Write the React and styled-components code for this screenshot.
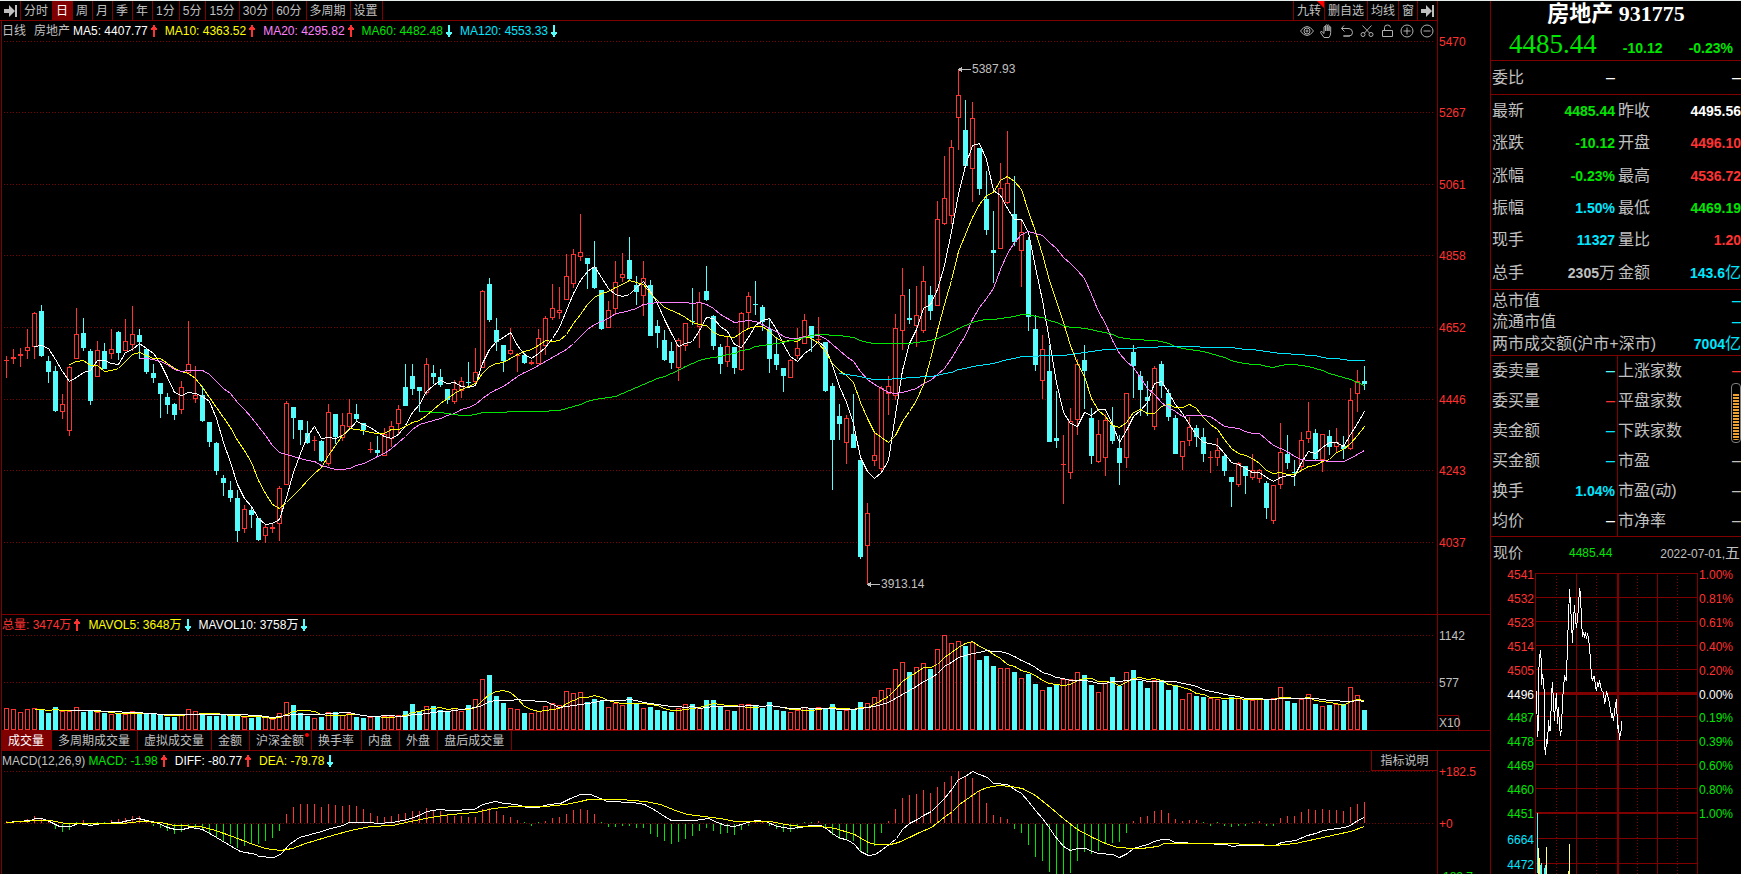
import React from "react";
import styled, { createGlobalStyle, css } from "styled-components";

const C = {
  line: "#800000",
  red: "#ff3232",
  green: "#00e600",
  cyan: "#54fcfc",
  blue: "#00e6ff",
  yellow: "#ffff00",
  pink: "#ff80ff",
  white: "#ffffff",
  gray: "#c0c0c0",
};

const Global = createGlobalStyle`
  * { box-sizing: border-box; }
  body {
    margin: 0;
    background: #000;
    color: ${C.gray};
    font: 12px/16px "Liberation Sans", "Noto Sans CJK SC", sans-serif;
  }
  button { font: inherit; color: inherit; background: none; border: 0; padding: 0; margin: 0; cursor: pointer; }
  dl, dt, dd, h1 { margin: 0; padding: 0; font-weight: 400; }
  svg { display: block; }
`;

const Page = styled.div`
  display: flex;
  height: 100vh;
  overflow: hidden;
  border-top: 1px solid #e6ecea;
  white-space: nowrap;
`;

const Main = styled.main`
  flex: 1;
  min-width: 0;
  display: flex;
  flex-direction: column;
`;

/* ---------- top toolbar ---------- */
const Toolbar = styled.nav`
  display: flex;
  height: 20px;
`;
const ToolbarInner = styled.div`
  flex: 1;
  display: flex;
  border-bottom: 1px solid ${C.line};
`;
const Spacer = styled.div`
  flex: 1;
`;
const AxisHead = styled.div`
  width: 53px;
  border-left: 1px solid ${C.line};
`;
const CollapseButton = styled.button`
  width: 21px;
  padding-left: 4px;
  border-right: 1px solid ${C.line};
`;
const PeriodButton = styled.button`
  padding: 0 4px 0 3px;
  border-right: 1px solid ${C.line};
  ${(p) => p.$active && css`background: ${C.line}; color: ${C.white};`}
`;
const ToolButton = styled.button`
  position: relative;
  padding: 0 3px 0 3px;
  border-left: 1px solid ${C.line};
`;
const NewCorner = styled.span`
  position: absolute;
  top: 0;
  right: 0;
  border-top: 7px solid #ff0000;
  border-left: 7px solid transparent;
`;

/* ---------- chart panes ---------- */
const Pane = styled.section`
  display: flex;
  margin-left: 1px;
  border-left: 1px solid ${C.line};
  border-bottom: 1px solid ${C.line};
  ${(p) => p.$grow && css`flex: 1; min-height: 0; overflow: hidden; border-bottom: 0;`}
`;
const Plot = styled.div`
  flex: 1;
  min-width: 0;
  overflow: hidden;
`;
const Axis = styled.div`
  width: 53px;
  border-left: 1px solid ${C.line};
`;
const Legend = styled.div`
  display: flex;
  align-items: center;
  height: 20px;
`;
const LegendName = styled.span`
  margin-right: ${(p) => p.$gap}px;
`;
const LegendItem = styled.span`
  display: flex;
  align-items: center;
  gap: 3px;
  margin-right: 8px;
  color: ${(p) => p.$color};
`;
const ChartTools = styled.div`
  display: flex;
  gap: 4px;
  margin-left: auto;
  padding-right: 2px;
`;
const IconButton = styled.button`
  width: 16px;
  height: 16px;
`;
const NoteButton = styled.button`
  align-self: stretch;
  width: 66px;
  margin-left: auto;
  border-left: 1px solid ${C.line};
  border-bottom: 1px solid ${C.line};
`;

const Tabs = styled.nav`
  display: flex;
  height: 20px;
  margin-left: 1px;
  border-left: 1px solid ${C.line};
  border-bottom: 1px solid ${C.line};
`;
const Tab = styled.button`
  position: relative;
  padding: 0 7px 0 6px;
  border-right: 1px solid ${C.line};
  ${(p) => p.$active && css`background: ${C.line}; color: ${C.white};`}
`;
const Dot = styled.span`
  position: absolute;
  top: 2px;
  right: 2px;
  width: 4px;
  height: 4px;
  border-radius: 2px;
  background: #ff0000;
`;

/* ---------- quote panel ---------- */
const Side = styled.aside`
  position: relative;
  width: 251px;
  flex: none;
  display: flex;
  flex-direction: column;
  border-left: 1px solid ${C.line};
  overflow: hidden;
  > * { flex: none; }
`;
const Head = styled.header`
  height: 60px;
  border-bottom: 1px solid ${C.line};
`;
const Title = styled.h1`
  height: 27px;
  text-align: center;
  color: ${C.white};
  font: bold 22px/25px "Liberation Serif", "Noto Sans CJK SC", serif;
`;
const Quote = styled.div`
  display: flex;
  align-items: baseline;
  justify-content: space-between;
  height: 32px;
  padding: 0 8px 0 18px;
  color: ${C.green};
  font: bold 14px/32px "Liberation Sans", sans-serif;
`;
const Price = styled.span`
  font: 27px/32px "Liberation Serif", serif;
`;
const Stats = styled.dl`
  display: grid;
  grid-template-columns: ${(p) => (p.$wide ? "1fr" : "127px 1fr")};
  grid-auto-rows: 1fr;
  height: ${(p) => p.$h}px;
  border-bottom: 1px solid ${C.line};
  font-size: 16px;
  line-height: 20px;
`;
const Stat = styled.div`
  display: flex;
  align-items: center;
  justify-content: space-between;
  &:nth-child(odd) {
    padding-left: 1px;
    padding-right: 3px;
    ${(p) => p.$divided && css`padding-right: 2px; border-right: 1px solid ${C.line};`}
  }
  ${(p) => p.$wide && css`&&:nth-child(n) { padding: 0 0 0 1px; }`}
`;
const Value = styled.dd`
  display: flex;
  align-items: center;
  color: ${(p) => p.$color};
  font-weight: ${(p) => (p.$plain ? 400 : 700)};
  font-size: ${(p) => (p.$plain ? 16 : 14)}px;
`;
const Unit = styled.span`
  font-size: 16px;
  font-weight: 400;
`;
const ScrollThumb = styled.div`
  position: absolute;
  right: 0;
  top: 382px;
  width: 10px;
  height: 60px;
  padding: 10px 1px 2px;
  border: 1px solid #808080;
  border-radius: 4px;
  background: repeating-linear-gradient(#f0a030 0 2px, #000 2px 3px) content-box, #000;
`;
const NowRow = styled.div`
  display: grid;
  grid-template-columns: 76px 1fr auto;
  align-items: center;
  height: 32px;
  padding: 0 1px 0 2px;
`;
const NowLabel = styled.span`
  font-size: 15px;
`;
const NowPrice = styled.span`
  color: ${C.green};
`;
const DayMark = styled.span`
  font-size: 15px;
`;

/* ---------- icons ---------- */
const ArrowUp = () => (
  <svg width="6" height="12" fill={C.red} role="img" aria-label="上升">
    <path d="M2 12V5H0V3h1V2h1V0h2v2h1v1h1v2H4v7z" />
  </svg>
);
const ArrowDown = () => (
  <svg width="6" height="12" fill={C.cyan} role="img" aria-label="下降">
    <path d="M2 0v7H0v2h1v1h1v2h2v-2h1V9h1V7H4V0z" />
  </svg>
);
const SkipIcon = () => (
  <svg width="13" height="12" fill={C.gray}>
    <path d="M0 4h5V0l6 6-6 6V8H0zM11 0h2v12h-2z" />
  </svg>
);
const icons = {
  显示: (
    <>
      <path d="M1.5 8Q4.500 3.500 8 3.500T14.500 8Q11.500 12.500 8 12.500T1.500 8Z" />
      <circle cx="8" cy="8" r="3" />
      <circle cx="8" cy="8" r="1" />
    </>
  ),
  拖动: <path d="M5 14.500 1.500 9.500q0-1.500 1.500-.8L5 10.500V4q.8-1.500 1.500 0V8 2.500q.9-1.500 1.700 0V8 2.500q.9-1.500 1.800 0V8 4q.8-1.500 1.700 0V9.500q0 3-1.700 5Z" />,
  撤销: <path d="M5 2.500 2.500 5.500 5.500 8.500M2.500 5.500H10Q13.500 6 13.500 9.500T10 13H4M5 13h6" />,
  剪切: (
    <>
      <path d="M3.500 2.500 10.500 10M12.500 2.500 5.500 10" />
      <circle cx="4" cy="11.500" r="2" />
      <circle cx="12" cy="11.500" r="2" />
    </>
  ),
  锁定: <path d="M3.500 7.500h10v6h-10zM5.500 7.500V4.500Q5.500 2 8.500 2T11.500 4.500" />,
  放大: (
    <>
      <circle cx="8" cy="8" r="6" />
      <path d="M4.500 8h7M8 4.500v7" />
    </>
  ),
  缩小: (
    <>
      <circle cx="8" cy="8" r="6" />
      <path d="M4.500 8h7" />
    </>
  ),
};

/* ---------- data ---------- */
// One entry per day: direction, high, low, body top, body bottom.
const candles = `
r356,377,360,360 r349,363,357,358 r348,366,354,355 r329,358,347,350 r312,358,313,346 c305,356,311,355 c356,382,361,371 c366,411,371,410 r394,418,404,411 r366,435,367,430
r308,358,334,358 c318,350,333,347 c349,404,351,400 r341,376,350,376 c343,368,351,368 r329,358,349,353 c331,359,332,352 r319,350,341,350 r306,350,334,344 c329,358,335,341
c348,373,349,371 c364,382,373,377 c383,417,383,393 c393,413,397,404 c403,419,404,414 r381,413,387,409 r321,372,364,372 r366,402,395,398 c386,421,395,420 c422,446,422,441
c442,474,443,470 c475,495,478,482 c481,501,490,497 c490,541,498,530 r505,532,509,528 c508,527,510,514 c518,540,518,539 r525,542,527,535 r523,532,527,528 r486,540,488,523
r401,484,403,484 c407,438,407,417 c420,444,420,429 c421,443,433,442 r436,450,440,440 c440,461,441,460 r404,465,412,463 c414,443,414,436 r413,440,425,437 r399,427,413,426
c404,420,414,418 c423,434,423,429 r442,452,449,449 c436,456,450,452 r428,455,434,455 r421,446,426,438 r405,433,409,423 c364,405,387,405 c364,394,376,388 c387,411,387,390
r358,394,364,392 c365,383,373,376 c369,386,377,384 c389,403,389,399 r380,403,389,401 r377,397,381,390 c362,385,382,382 r348,382,372,381 r290,367,291,367 c278,321,284,319
c318,350,330,341 c345,371,345,360 r328,354,350,353 r353,371,355,355 c353,363,355,362 r360,364,362,363 r329,363,338,363 r316,354,318,345 r284,319,308,317 r287,318,310,312
r254,299,276,299 r249,287,254,283 r214,260,252,256 c258,288,258,263 c241,288,267,287 c290,329,290,328 r301,327,310,327 r261,314,282,308 r253,281,274,277 c237,279,260,278
c276,304,285,291 r261,315,278,295 c280,335,285,335 c320,347,326,332 c330,360,340,359 c342,368,351,362 r338,380,340,367 r323,350,323,345 c288,324,321,321 r292,347,302,326
c266,300,291,299 c315,349,316,345 c344,373,347,363 r336,366,346,361 c347,373,347,367 r312,370,313,369 r292,328,296,312 c281,314,304,304 c305,330,307,321 c318,372,329,358
c337,369,354,364 c368,391,368,375 r359,377,360,377 r328,358,348,355 r314,343,320,343 c326,351,326,337 r317,342,339,339 c342,391,342,390 c383,489,386,439 c404,439,416,423
r415,463,418,442 c394,447,434,447 c460,558,460,556 r503,583,513,545 r433,465,455,460 r386,471,388,468 r376,414,386,393 r314,399,328,395 r268,349,295,330 c289,323,318,319
r286,346,315,325 r266,332,281,330 c286,319,295,310 r201,305,219,305 r156,224,198,223 r140,223,147,215 r69,149,95,117 c100,165,130,165 r102,201,118,168 c148,194,148,188
c171,234,199,229 c211,282,250,252 r163,248,188,248 r131,203,183,202 c176,245,214,241 r221,286,232,250 c237,330,240,316 c315,370,329,364 r335,398,349,380 c345,441,371,441
c391,447,438,440 r435,503,464,464 r408,478,421,472 r359,434,364,419 c345,408,360,370 c408,463,418,455 r420,462,434,461 r414,475,420,457 c407,443,425,440 c435,484,448,462
r393,467,393,457 c345,397,352,365 c371,415,376,389 c381,415,397,400 r366,429,368,426 c361,397,364,385 c389,420,393,416 c415,453,418,453 r441,469,441,456 r417,445,427,440
c425,446,428,436 c428,461,437,453 r451,472,457,457 r438,465,450,457 c453,475,456,470 c477,506,477,481 r462,486,463,484 c466,493,466,475 r454,479,470,477 r469,482,470,478
c481,518,483,507 r485,523,485,520 r423,488,452,484 c435,468,454,462 c460,485,472,472 r432,469,440,466 r402,442,431,438 c429,459,433,458 r434,471,434,459 c430,454,436,446
r428,451,442,446 c436,458,446,448 r388,449,400,448 r370,411,381,393 c366,389,381,383`
  .trim()
  .split(/\s+/)
  .map((s) => {
    const [high, low, top, bottom] = s.slice(1).split(",").map(Number);
    const up = s[0] === "r";
    return { up, high, low, top, bottom, close: up ? top : bottom };
  });

const nums = (s) => s.trim().split(/\s+/).map(Number);

const volumes = nums(`
708 709 712 709 708 709 713 707 711 711 707 712 711 712 713 714 714 714 711 714 714 714 715 717 717 714 709 711 714 716
716 715 715 715 717 718 717 717 719 713 702 705 713 716 718 717 712 712 715 713 717 718 717 717 716 716 715 711 704 711
706 706 710 711 708 711 705 699 679 675 696 703 708 709 713 713 711 706 703 705 691 693 692 702 699 701 707 703 705 697
703 708 707 710 711 712 708 704 704 708 700 700 706 710 711 704 704 705 708 702 710 711 712 710 707 709 707 708 704 711
710 710 702 703 697 690 688 669 662 672 667 663 669 649 635 643 641 646 642 660 656 666 668 668 672 678 674 684 690 687
684 679 679 672 675 685 692 683 677 686 672 670 681 688 680 680 690 685 699 693 696 697 698 699 700 697 698 700 700 699
699 698 687 701 703 699 694 704 706 705 704 704 687 695 710`);

const macd = nums(`
821 821 821 819 816 818 820 828 831 829 822 820 825 822 822 820 819 818 816 816 820 825 827 830 833 831 828 828 829 833
836 840 843 847 845 843 843 840 837 830 814 807 804 804 804 807 804 805 806 805 806 809 813 816 817 816 814 813 811 811
808 810 811 814 816 816 817 817 809 808 811 815 817 820 822 825 822 821 818 817 814 810 809 810 814 822 826 826 825 825
827 827 833 836 840 843 841 838 835 830 827 830 833 832 834 829 825 821 821 825 828 831 831 828 822 822 821 827 834 838
838 840 850 852 845 832 821 809 798 795 794 790 793 787 782 776 771 776 778 790 803 815 817 819 828 832 844 856 860 871
876 876 872 860 851 853 850 843 842 841 832 821 817 816 811 810 813 819 821 820 820 822 825 822 825 826 825 825 822 821
825 825 818 816 816 812 809 810 809 810 810 811 807 804 802`);

const diffLine =
  "6,822 30,820 35,818 41,818 49,821 59,826 70,826 78,823 90,825 101,823 120,822 128,820 138,818 146,820 156,822 167,827 175,829 182,829 190,827 202,829 211,834 226,843 240,851 256,854 258,856 273,857 280,854 289,844 299,837 321,831 327,829 342,825 349,822 369,822 378,823 392,822 407,819 416,816 427,811 438,809 450,810 474,809 482,804 495,801 504,803 516,804 526,807 538,807 548,804 560,803 570,798 580,794 590,794 600,798 607,801 633,802 644,804 655,810 664,816 671,820 694,820 708,818 717,822 725,825 734,826 744,823 755,820 765,821 777,826 790,828 800,827 810,825 820,825 827,829 832,833 838,837 848,840 854,844 860,851 868,855 875,854 882,849 890,843 896,838 902,829 909,823 917,819 923,815 931,811 938,804 944,798 952,788 958,779 965,776 972,771 979,774 987,777 993,783 1007,784 1014,789 1021,793 1028,801 1035,810 1042,818 1048,826 1054,835 1063,846 1070,850 1077,848 1085,848 1092,851 1098,853 1112,854 1119,857 1127,853 1133,848 1140,846 1147,844 1154,841 1161,839 1168,839 1175,842 1200,843 1226,844 1232,846 1240,845 1275,845 1281,842 1295,840 1307,835 1315,833 1323,830 1344,827 1350,825 1357,820 1364,817";
const deaLine =
  "6,822 38,820 50,820 65,823 122,823 140,821 160,822 174,825 200,826 215,830 232,836 250,843 265,848 280,850 292,848 305,843 325,837 350,830 370,826 392,825 410,821 430,817 450,814 475,812 493,808 513,806 545,806 565,804 580,801 588,799 620,799 645,801 660,804 675,810 687,814 720,818 735,821 770,821 785,824 800,826 820,826 835,828 854,834 868,842 875,844 890,844 898,842 909,837 919,832 931,827 945,816 952,811 959,804 969,797 979,790 987,787 998,785 1010,786 1022,788 1035,795 1050,807 1064,819 1077,829 1092,837 1105,843 1117,847 1133,848 1141,848 1157,846 1164,843 1226,843 1275,845 1295,843 1327,836 1350,831 1364,826";

const px = (i) => 6 + 7 * i;

// Simple moving average of a series, as polyline points.
const average = (series, n) =>
  series
    .map((_, i) => {
      if (i < n - 1) return null;
      const sum = series.slice(i - n + 1, i + 1).reduce((a, b) => a + b, 0);
      return `${px(i)},${Math.round(sum / n)}`;
    })
    .filter(Boolean)
    .join(" ");

const closes = candles.map((c) => c.close);

const Line = ({ points, color }) => (
  <polyline points={points} fill="none" stroke={color} transform="translate(0.5 0.5)" />
);
const Dotted = ({ y }) => (
  <line x1="4" x2="100%" y1={y + 0.5} y2={y + 0.5} stroke={C.line} strokeDasharray="1 2" />
);
const Bar = ({ x, top, bottom, up }) =>
  up && bottom - top > 1 ? (
    <rect x={x - 1.5} y={top + 0.5} width="4" height={bottom - top} fill="#000" stroke={C.red} />
  ) : (
    <rect x={x - 2} y={top} width="5" height={bottom - top + 1} fill={up ? C.red : C.cyan} />
  );
const AxisText = ({ y, color, children }) => (
  <text x="1" y={y + 5} fill={color}>
    {children}
  </text>
);

const PriceChart = () => (
  <svg width="100%" height="573" shapeRendering="crispEdges">
    <g transform="translate(-2 -41)">
      {[41, 112, 184, 255, 327, 399, 470, 542].map((y) => (
        <Dotted key={y} y={y} />
      ))}
      {candles.map((c, i) => (
        <g key={i}>
          <rect x={px(i)} y={c.high} width="1" height={c.low - c.high + 1} fill={c.up ? C.red : C.cyan} />
          <Bar x={px(i)} {...c} />
        </g>
      ))}
      <Line points={average(closes, 5)} color={C.white} />
      <Line points={average(closes, 10)} color={C.yellow} />
      <Line points={average(closes, 20)} color={C.pink} />
      <Line points={average(closes, 60)} color={C.green} />
      <Line points={average(closes, 120)} color={C.blue} />
      <path d="M958 69h1v-1h2v-1h1v2h9v1h-9v2h-1v-1h-2v-1h-1zM867 584h1v-1h2v-1h1v2h9v1h-9v2h-1v-1h-2v-1h-1z" fill={C.gray} />
      <text x="972" y="73" fill={C.gray}>5387.93</text>
      <text x="881" y="588" fill={C.gray}>3913.14</text>
    </g>
  </svg>
);

const VolumeChart = () => (
  <svg width="100%" height="95" shapeRendering="crispEdges">
    <g transform="translate(-2 -635)">
      <Dotted y={635} />
      <Dotted y={682} />
      {volumes.map((v, i) => (
        <Bar key={i} x={px(i)} top={v} bottom={729} up={candles[i].up} />
      ))}
      <Line points={average(volumes, 5)} color={C.yellow} />
      <Line points={average(volumes, 10)} color={C.white} />
    </g>
  </svg>
);

const MacdChart = () => (
  <svg width="100%" height="160" shapeRendering="crispEdges">
    <g transform="translate(-2 -771)">
      <Dotted y={771} />
      <Dotted y={823} />
      {macd.map((v, i) =>
        v < 823 ? (
          <rect key={i} x={px(i)} y={v} width="1" height={823 - v} fill={v < 822 ? C.red : C.green} />
        ) : (
          <rect key={i} x={px(i)} y="824" width="1" height={v - 823} fill={C.green} />
        )
      )}
      <Line points={diffLine} color={C.white} />
      <Line points={deaLine} color={C.yellow} />
    </g>
  </svg>
);

/* intraday chart in the side panel; trace points are in thirds of a pixel */
const trace =
  "289,455 292,590 294,555 296,408 299,352 301,330 303,372 304,434 307,403 310,424 312,468 314,612 316,644 319,598 322,610 325,540 328,570 331,572 334,460 337,427 340,490 343,542 346,488 349,460 352,550 355,503 358,560 361,586 364,568 367,478 370,445 373,409 379,421 382,305 385,235 388,147 391,190 394,250 397,308 400,235 403,196 406,240 409,262 412,237 415,200 418,145 421,160 424,245 427,288 430,277 433,290 436,280 439,294 442,280 445,296 448,320 451,360 454,408 457,422 460,410 463,408 466,440 469,450 472,430 475,436 478,424 481,432 484,452 490,458 493,490 496,478 499,455 502,463 508,490 514,530 517,522 520,540 523,515 526,492 529,478 532,565 535,555 538,598 541,580 544,566 545,540"
    .split(" ")
    .map((p) => {
      const [x, y] = p.split(",").map(Number);
      return `${Math.floor(1440 + x / 3)},${Math.floor(540 + y / 3)}`;
    })
    .join(" ");

const levels = [
  [573, "4541", "1.00%", C.red], [597, "4532", "0.81%", C.red], [621, "4523", "0.61%", C.red],
  [645, "4514", "0.40%", C.red], [669, "4505", "0.20%", C.red], [693, "4496", "0.00%", C.white],
  [716, "4487", "0.19%", C.green], [740, "4478", "0.39%", C.green], [764, "4469", "0.60%", C.green],
  [788, "4460", "0.80%", C.green], [812, "4451", "1.00%", C.green], [838, "6664", "", C.blue],
  [863, "4472", "", C.blue],
];
const ticks = [
  [1537, 813, C.cyan], [1538, 848, "#ffff80"], [1539, 858, "#ffff80"], [1540, 865, C.cyan], [1541, 863, C.cyan],
  [1544, 868, C.cyan], [1545, 865, C.cyan], [1546, 847, "#ffff80"], [1568, 871, "#ffff80"], [1569, 844, "#ffff80"],
];

const DayChart = () => (
  <svg width="250" height="320" shapeRendering="crispEdges">
    <g transform="translate(-1491 -569)">
      {levels.map(([y]) => (
        <rect key={y} x="1535" y={y === 693 ? 692 : y} width="163" height={y === 693 ? 3 : y === 812 ? 2 : 1} fill={C.line} />
      ))}
      {[1535, 1576, 1617, 1657, 1697].map((x) => (
        <rect key={x} x={x} y="573" width={x === 1617 ? 2 : 1} height="320" fill={C.line} />
      ))}
      {[1556, 1596, 1637, 1677].map((x) => (
        <line key={x} x1={x + 0.5} x2={x + 0.5} y1="576" y2="890" stroke={C.line} strokeDasharray="1 2" />
      ))}
      {ticks.map(([x, y, fill]) => (
        <rect key={x} x={x} y={y} width="1" height="60" fill={fill} />
      ))}
      <Line points={trace} color={C.white} />
      {levels.map(([y, left, right, color]) => (
        <g key={y} fill={color}>
          <text x="1534" y={y + 6} textAnchor="end">{left}</text>
          <text x="1699" y={y + 6}>{right}</text>
        </g>
      ))}
    </g>
  </svg>
);

const quotes = [
  ["最新", "4485.44", C.green], ["昨收", "4495.56", C.white],
  ["涨跌", "-10.12", C.green], ["开盘", "4496.10", C.red],
  ["涨幅", "-0.23%", C.green], ["最高", "4536.72", C.red],
  ["振幅", "1.50%", C.blue], ["最低", "4469.19", C.green],
  ["现手", "11327", C.blue], ["量比", "1.20", C.red],
  ["总手", "2305", C.gray, "万"], ["金额", "143.6", C.blue, "亿"],
];
const market = [
  ["总市值", "–", C.blue],
  ["流通市值", "–", C.blue],
  ["两市成交额(沪市+深市)", "7004", C.blue, "亿"],
];
const breadth = [
  ["委卖量", "–", C.cyan], ["上涨家数", "–", C.red],
  ["委买量", "–", C.red], ["平盘家数", "–", C.white],
  ["卖金额", "–", C.blue], ["下跌家数", "–", C.green],
  ["买金额", "–", C.blue], ["市盈", "–", C.gray],
  ["换手", "1.04%", C.blue], ["市盈(动)", "–", C.gray],
  ["均价", "–", C.white], ["市净率", "–", C.gray],
];

const StatList = ({ rows, height, wide, divided }) => (
  <Stats $h={height} $wide={wide}>
    {rows.map(([label, value, color, unit], i) => (
      <Stat key={i} $wide={wide} $divided={divided}>
        <dt>{label}</dt>
        <Value $color={color} $plain={value === "–"}>
          {value}
          {unit && <Unit>{unit}</Unit>}
        </Value>
      </Stat>
    ))}
  </Stats>
);

const Indicator = ({ color, up, children }) => (
  <LegendItem $color={color}>
    {children}
    {up ? <ArrowUp /> : <ArrowDown />}
  </LegendItem>
);

const periods = ["分时", "日", "周", "月", "季", "年", "1分", "5分", "15分", "30分", "60分", "多周期", "设置"];
const volumeTabs = ["成交量", "多周期成交量", "虚拟成交量", "金额", "沪深金额", "换手率", "内盘", "外盘", "盘后成交量"];

export default function App() {
  return (
    <>
      <Global />
      <Page>
        <Main>
          <Toolbar>
            <ToolbarInner>
              <CollapseButton aria-label="收起左栏"><SkipIcon /></CollapseButton>
              {periods.map((p) => (
                <PeriodButton key={p} $active={p === "日"}>{p}</PeriodButton>
              ))}
              <Spacer />
              <ToolButton>九转<NewCorner /></ToolButton>
              <ToolButton>删自选</ToolButton>
              <ToolButton>均线</ToolButton>
              <ToolButton>窗</ToolButton>
              <ToolButton aria-label="收起右栏"><SkipIcon /></ToolButton>
            </ToolbarInner>
            <AxisHead />
          </Toolbar>

          <Pane>
            <Plot>
              <Legend>
                <LegendName $gap={8}>日线</LegendName>
                <LegendName $gap={3}>房地产</LegendName>
                <Indicator color={C.white} up>MA5: 4407.77</Indicator>
                <Indicator color={C.yellow} up>MA10: 4363.52</Indicator>
                <Indicator color={C.pink} up>MA20: 4295.82</Indicator>
                <Indicator color={C.green}>MA60: 4482.48</Indicator>
                <Indicator color={C.blue}>MA120: 4553.33</Indicator>
                <ChartTools>
                  {Object.entries(icons).map(([name, shape]) => (
                    <IconButton key={name} aria-label={name}>
                      <svg width="16" height="16" fill="none" stroke="#b0b0b0">{shape}</svg>
                    </IconButton>
                  ))}
                </ChartTools>
              </Legend>
              <PriceChart />
            </Plot>
            <Axis>
              <svg width="52" height="593">
                <g transform="translate(0 -21)">
                  {[[41, 5470], [112, 5267], [184, 5061], [255, 4858], [327, 4652], [399, 4446], [470, 4243], [542, 4037]].map(
                    ([y, label]) => (
                      <AxisText key={y} y={y} color={C.red}>{label}</AxisText>
                    )
                  )}
                </g>
              </svg>
            </Axis>
          </Pane>

          <Pane>
            <Plot>
              <Legend>
                <Indicator color={C.red} up>总量: 3474万</Indicator>
                <Indicator color={C.yellow}>MAVOL5: 3648万</Indicator>
                <Indicator color={C.white}>MAVOL10: 3758万</Indicator>
              </Legend>
              <VolumeChart />
            </Plot>
            <Axis>
              <svg width="52" height="115">
                <g transform="translate(0 -615)">
                  <AxisText y={635} color={C.gray}>1142</AxisText>
                  <AxisText y={682} color={C.gray}>577</AxisText>
                  <path d="M0 715.500H20.500V730" fill="none" stroke={C.line} />
                  <AxisText y={722} color={C.gray}>X10</AxisText>
                </g>
              </svg>
            </Axis>
          </Pane>

          <Tabs>
            {volumeTabs.map((t) => (
              <Tab key={t} $active={t === "成交量"}>
                {t}
                {t === "沪深金额" && <Dot />}
              </Tab>
            ))}
          </Tabs>

          <Pane $grow>
            <Plot>
              <Legend>
                <LegendName $gap={3}>MACD(12,26,9)</LegendName>
                <Indicator color={C.green} up>MACD: -1.98</Indicator>
                <Indicator color={C.white} up>DIFF: -80.77</Indicator>
                <Indicator color={C.yellow}>DEA: -79.78</Indicator>
                <NoteButton>指标说明</NoteButton>
              </Legend>
              <MacdChart />
            </Plot>
            <Axis>
              <svg width="52" height="180">
                <g transform="translate(0 -751)">
                  <AxisText y={771} color={C.red}>+182.5</AxisText>
                  <AxisText y={823} color={C.red}>+0</AxisText>
                  <AxisText y={876} color={C.green}>-182.7</AxisText>
                </g>
              </svg>
            </Axis>
          </Pane>
        </Main>

        <Side>
          <Head>
            <Title>房地产 931775</Title>
            <Quote>
              <Price>4485.44</Price>
              <span>-10.12</span>
              <span>-0.23%</span>
            </Quote>
          </Head>
          <StatList rows={[["委比", "–", C.white], ["", "–", C.white]]} height={34} />
          <StatList rows={quotes} height={195} />
          <StatList rows={market} height={66} wide />
          <StatList rows={breadth} height={181} divided />
          <NowRow>
            <NowLabel>现价</NowLabel>
            <NowPrice>4485.44</NowPrice>
            <span>2022-07-01,<DayMark>五</DayMark></span>
          </NowRow>
          <DayChart />
          <ScrollThumb />
        </Side>
      </Page>
    </>
  );
}
